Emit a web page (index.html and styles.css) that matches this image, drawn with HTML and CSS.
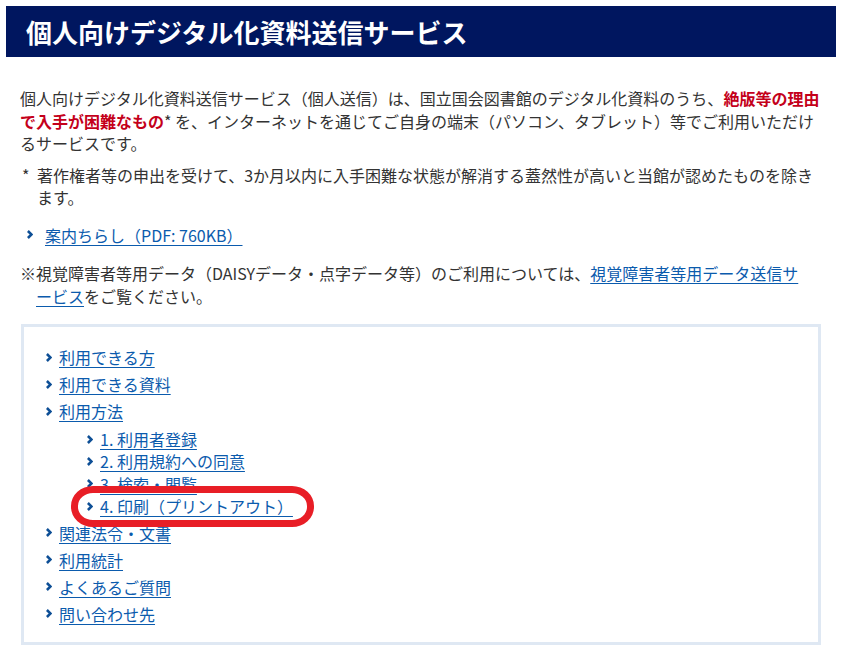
FILE: index.html
```html
<!DOCTYPE html>
<html lang="ja">
<head>
<meta charset="utf-8">
<title>個人向けデジタル化資料送信サービス</title>
<link rel="stylesheet" href="styles.css">
</head>
<body>
<header class="page-head">
  <h1 class="page-title">個人向けデジタル化資料送信サービス</h1>
</header>
<main class="content">
  <p class="lead">個人向けデジタル化資料送信サービス（個人送信）は、国立国会図書館のデジタル化資料のうち、<strong class="em-red">絶版等の理由で入手が困難なもの</strong>* を、インターネットを通じてご自身の端末（パソコン、タブレット）等でご利用いただけるサービスです。</p>
  <p class="note"><span class="note-mark">*</span><span class="note-text">著作権者等の申出を受けて、3か月以内に入手困難な状態が解消する蓋然性が高いと当館が認めたものを除きます。</span></p>
  <p class="file-link"><svg class="chev" viewBox="0 0 6 9" width="6" height="9"><polyline points="0.9,1 4.5,4.5 0.9,8" fill="none" stroke="currentColor" stroke-width="2.6"/></svg><a href="#">案内ちらし（PDF: 760KB）</a></p>
  <p class="kome">※視覚障害者等用データ（DAISYデータ・点字データ等）のご利用については、<a href="#">視覚障害者等用データ送信サービス</a>をご覧ください。</p>

  <nav class="toc">
    <ul class="toc-list">
      <li><svg class="chev" viewBox="0 0 6 9" width="6" height="9"><polyline points="0.9,1 4.5,4.5 0.9,8" fill="none" stroke="currentColor" stroke-width="2.6"/></svg><a href="#">利用できる方</a></li>
      <li><svg class="chev" viewBox="0 0 6 9" width="6" height="9"><polyline points="0.9,1 4.5,4.5 0.9,8" fill="none" stroke="currentColor" stroke-width="2.6"/></svg><a href="#">利用できる資料</a></li>
      <li class="has-sub"><div class="row"><svg class="chev" viewBox="0 0 6 9" width="6" height="9"><polyline points="0.9,1 4.5,4.5 0.9,8" fill="none" stroke="currentColor" stroke-width="2.6"/></svg><a href="#">利用方法</a></div>
        <ul class="sub-list">
          <li><svg class="chev" viewBox="0 0 6 9" width="6" height="9"><polyline points="0.9,1 4.5,4.5 0.9,8" fill="none" stroke="currentColor" stroke-width="2.6"/></svg><a href="#">1. 利用者登録</a></li>
          <li><svg class="chev" viewBox="0 0 6 9" width="6" height="9"><polyline points="0.9,1 4.5,4.5 0.9,8" fill="none" stroke="currentColor" stroke-width="2.6"/></svg><a href="#">2. 利用規約への同意</a></li>
          <li><svg class="chev" viewBox="0 0 6 9" width="6" height="9"><polyline points="0.9,1 4.5,4.5 0.9,8" fill="none" stroke="currentColor" stroke-width="2.6"/></svg><a href="#">3. 検索・閲覧</a></li>
          <li class="marked"><svg class="chev" viewBox="0 0 6 9" width="6" height="9"><polyline points="0.9,1 4.5,4.5 0.9,8" fill="none" stroke="currentColor" stroke-width="2.6"/></svg><a href="#">4. 印刷（プリントアウト）</a><span class="circle" aria-hidden="true"></span></li>
        </ul>
      </li>
      <li><svg class="chev" viewBox="0 0 6 9" width="6" height="9"><polyline points="0.9,1 4.5,4.5 0.9,8" fill="none" stroke="currentColor" stroke-width="2.6"/></svg><a href="#">関連法令・文書</a></li>
      <li><svg class="chev" viewBox="0 0 6 9" width="6" height="9"><polyline points="0.9,1 4.5,4.5 0.9,8" fill="none" stroke="currentColor" stroke-width="2.6"/></svg><a href="#">利用統計</a></li>
      <li><svg class="chev" viewBox="0 0 6 9" width="6" height="9"><polyline points="0.9,1 4.5,4.5 0.9,8" fill="none" stroke="currentColor" stroke-width="2.6"/></svg><a href="#">よくあるご質問</a></li>
      <li><svg class="chev" viewBox="0 0 6 9" width="6" height="9"><polyline points="0.9,1 4.5,4.5 0.9,8" fill="none" stroke="currentColor" stroke-width="2.6"/></svg><a href="#">問い合わせ先</a></li>
    </ul>
  </nav>
</main>
</body>
</html>
```

FILE: styles.css
```css
* { box-sizing: border-box; }
html, body { margin: 0; padding: 0; background: #fff; }
body {
  font-family: "Noto Sans CJK JP", "Noto Sans", sans-serif;
  font-size: 16px;
  line-height: 22.5px;
  color: #333;
}
.page-head {
  margin: 6px 5px 0 6px;
  height: 51px;
  background: #00165f;
  display: flex;
  align-items: center;
  padding-left: 20px;
}
.page-title {
  margin: 0;
  color: #fff;
  font-size: 26px;
  font-weight: 700;
  line-height: 1;
}
.content {
  padding: 30px 16px 0 20px;
}
p { margin: 0; }
a { color: #0b5bad; text-decoration: underline; text-underline-offset: 3px; }
.em-red { color: #c4001a; font-weight: 700; }
.note {
  margin-top: 9px;
  display: flex;
  padding-left: 2px;
}
.note-mark { flex: 0 0 15px; }
.note-text { flex: 1; padding-right: 4px; }
.file-link {
  margin-top: 15px;
  display: flex;
  align-items: center;
  padding-left: 7px;
}
.chev { color: #0e4f96; flex: 0 0 auto; }
.file-link .chev { margin-right: 12px; }
.kome {
  margin-top: 16px;
  width: 792px;
  padding-left: 16px;
  text-indent: -16px;
}
.toc {
  margin-top: 17px;
  margin-left: 1px;
  width: 800px;
  border: 3px solid #dfe8f3;
  padding: 19px 20px 17px 22px;
}
.toc ul { list-style: none; margin: 0; padding: 0; }
.toc-list > li { margin-bottom: 4.5px; }
.toc-list > li:last-child { margin-bottom: 0; }
.toc li, .toc .row { display: flex; align-items: center; }
.toc li.has-sub { display: block; }
.toc .chev { margin-right: 7px; }
.sub-list { margin-top: 5.5px !important; padding-left: 41px !important; }
.sub-list li { position: relative; height: 22.3px; }
.circle {
  position: absolute;
  left: -16px;
  top: -9px;
  width: 243px;
  height: 41px;
  border: 7px solid #e81e26;
  border-radius: 22px / 20px;
  pointer-events: none;
}
```
